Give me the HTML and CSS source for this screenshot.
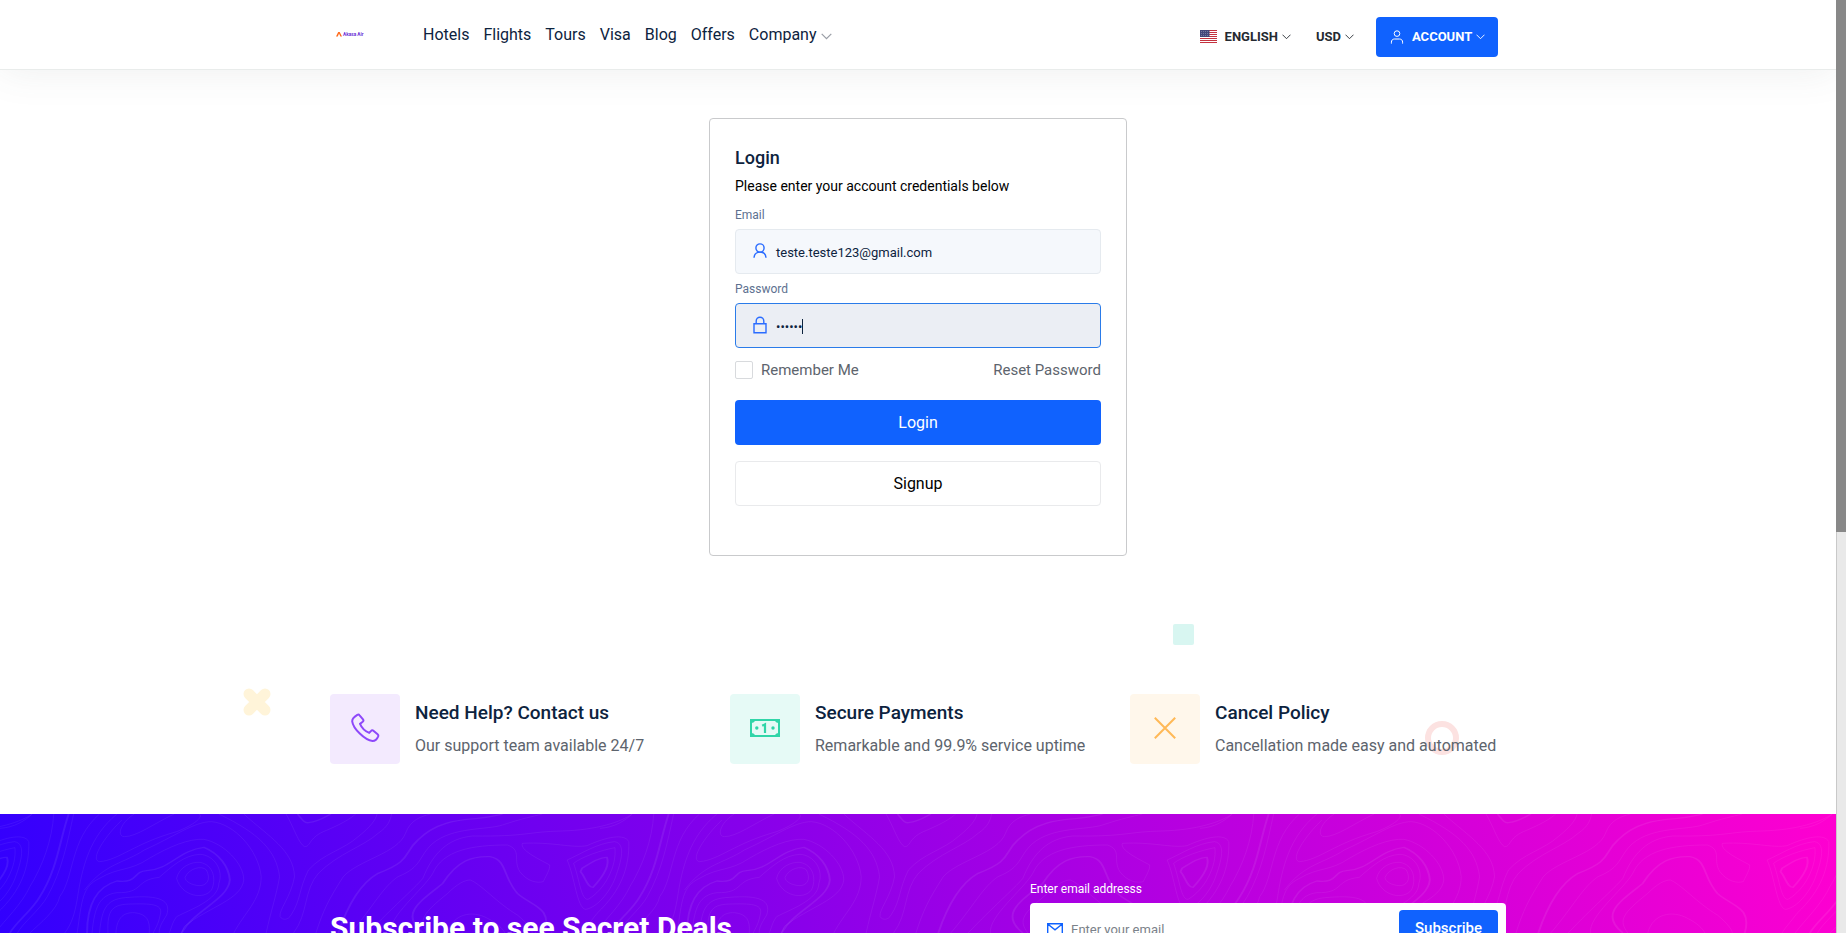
FILE: index.html
```html
<!DOCTYPE html>
<html lang="en">
<head>
<meta charset="utf-8">
<title>Login</title>
<link rel="stylesheet" href="styles.css">
</head>
<body>
<div class="page">
  <header class="header">
    <div class="container header-row">
      <a class="logo"><svg width="28" height="8" viewBox="0 0 28 8"><path d="M0 5.6 2.2 1h1.5L6 5.6H4.4L3 2.6 1.8 5.6z" fill="#ff6a1c"/><text x="7" y="5.4" class="logo-text" textLength="20.5" lengthAdjust="spacingAndGlyphs">Akasa Air</text></svg></a>
      <nav class="nav">
        <a>Hotels</a><a>Flights</a><a>Tours</a><a>Visa</a><a>Blog</a><a>Offers</a><a>Company<svg class="nav-chev" width="11" height="7" viewBox="0 0 11 7"><path d="M.7 .8 5.5 5.6 10.3 .8"/></svg></a>
      </nav>
      <div class="tools">
        <a class="tool lang"><svg class="flag" width="17" height="13" viewBox="0 0 17 13"><path fill="#fff" d="M0 0h17v13H0z"/><path d="M0 .5h17M0 2.5h17M0 4.5h17M0 6.5h17M0 8.5h17M0 10.5h17M0 12.5h17" stroke="#c4323f"/><path fill="#43477a" d="M0 0h9.5v7H0z"/><path d="M1 1.5h8M1 3.5h8M1 5.5h8" stroke="#8b8fb0" stroke-width=".7" stroke-dasharray="1 1"/></svg>ENGLISH<svg class="chev" width="9" height="6" viewBox="0 0 9 6"><path d="M.5 .7 4.5 4.7 8.5 .7"/></svg></a>
        <a class="tool usd">USD<svg class="chev" width="9" height="6" viewBox="0 0 9 6"><path d="M.5 .7 4.5 4.7 8.5 .7"/></svg></a>
        <a class="tool account"><svg class="person" width="14" height="14" viewBox="0 0 14 14"><circle cx="7" cy="3.6" r="2.8"/><path d="M1.4 13.6v-1.4c0-2 1.2-3.2 3.2-3.2h4.8c2 0 3.2 1.2 3.2 3.2v1.4"/></svg>ACCOUNT<svg class="chev" width="9" height="6" viewBox="0 0 9 6"><path d="M.5 .7 4.5 4.7 8.5 .7"/></svg></a>
      </div>
    </div>
  </header>

  <main class="main">
    <section class="card">
      <h1 class="card-title">Login</h1>
      <p class="card-sub">Please enter your account credentials below</p>
      <div class="label">Email</div>
      <div class="field"><svg class="field-icon" width="14" height="18" viewBox="0 0 14 18"><circle cx="7" cy="6" r="4.1"/><path d="M1 15.8c.3-3.600 2.800-5.700 6-5.700s5.700 2.100 6 5.700"/></svg><span>teste.teste123@gmail.com</span></div>
      <div class="label">Password</div>
      <div class="field focused"><svg class="field-icon" width="14" height="18" viewBox="0 0 14 18"><path d="M1 7.700h12v9H1zM3.200 7.700V5a3.800 3.800 0 0 1 7.600 0v2.700"/></svg><span>••••••</span><i class="caret"></i></div>
      <div class="options"><label class="remember"><i class="box"></i>Remember Me</label><a>Reset Password</a></div>
      <div class="btn primary">Login</div>
      <div class="btn outline">Signup</div>
    </section>
  </main>

  <section class="features">
    <svg class="decor cross" width="28" height="28" viewBox="0 0 28 28"><path d="M6 6 22 22M22 6 6 22"/></svg>
    <i class="decor square"></i>
    <i class="decor ring"></i>
    <div class="container feature-row">
      <article class="feature">
        <div class="tile violet"><svg width="30" height="30" viewBox="0 0 30 30"><path d="M7.300 1.900C5.200 3.200 2.100 5.600 2.200 8.300 3.100 15.500 14.800 27.200 22.500 28c2.800-.1 4.700-2.300 5.700-4.700.3-.8 0-1.500-.6-2l-4.200-3.600c-.7-.6-1.700-.6-2.300.1l-1.900 2.100c-4.300-1.800-7.600-5.200-9.200-9l2.700-2.100c.8-.7.9-1.700.3-2.500L9.600 2.300c-.6-.8-1.500-.9-2.300-.4z" fill="none" stroke="#8d48fa" stroke-width="2" stroke-linejoin="round"/></svg></div>
        <div><h2 class="feature-title">Need Help? Contact us</h2><p class="feature-text">Our support team available 24/7</p></div>
      </article>
      <article class="feature">
        <div class="tile mint"><svg width="30" height="18" viewBox="0 0 30 18"><path d="M1 1h28v16H1z" fill="none" stroke="#30d5a8" stroke-width="2"/><path d="M1 1h4c0 2-1.500 3-4 3zM29 1h-4c0 2 1.500 3 4 3zM1 17h4c0-2-1.500-3-4-3zM29 17h-4c0-2 1.500-3 4-3z" fill="#30d5a8"/><circle cx="6.800" cy="9" r="1.700" fill="#30d5a8"/><circle cx="23" cy="9" r="1.700" fill="#30d5a8"/><path d="M12.200 6.800l2.800-1.500V14" fill="none" stroke="#30d5a8" stroke-width="2.200"/></svg></div>
        <div><h2 class="feature-title">Secure Payments</h2><p class="feature-text">Remarkable and 99.9% service uptime</p></div>
      </article>
      <article class="feature">
        <div class="tile amber"><svg width="22" height="22" viewBox="0 0 22 22"><path d="M.8 .8 21.200 21.200M21.200 .8.800 21.200" stroke="#ffb957" stroke-width="2"/></svg></div>
        <div><h2 class="feature-title">Cancel Policy</h2><p class="feature-text">Cancellation made easy and automated</p></div>
      </article>
    </div>
  </section>

  <section class="subscribe">
    <svg class="contours" width="1836" height="119" viewBox="0 0 1836 119">
      <defs>
        <g id="topo" transform="scale(.4975 .33333) translate(0 -42)">
          <path d="M1170 205C1180 195 1205 170 1220 172C1226 195 1215 225 1192 262C1180 262 1178 235 1167 215Z" class="bold"/>
          <path d="M1153 190C1170 170 1210 150 1236 143C1240 200 1215 270 1182 298C1168 300 1165 240 1153 190Z"/>
          <path d="M1140 180C1170 160 1200 130 1235 125C1262 130 1245 200 1235 240C1220 290 1195 325 1177 328C1160 325 1155 230 1140 180Z"/>
          <path d="M1050 130C1110 125 1150 145 1180 137C1220 110 1255 100 1264 125C1265 200 1250 270 1200 340C1185 370 1175 385 1170 399"/>
          <path d="M1206 85C1236 82 1256 62 1271 42"/>
          <path d="M108 42C105 120 85 200 60 260C45 310 10 360 -10 399"/>
          <path d="M138 42C120 120 115 210 80 290C65 330 30 370 20 399" class="bold"/>
          <path d="M148 42C135 130 125 210 95 290C80 330 45 370 35 399"/>
          <path d="M200 42C140 120 150 230 120 290C115 330 80 370 60 399M235 42C180 110 165 200 155 300C150 340 145 370 130 399"/>
          <path d="M270 42C240 70 235 110 250 110C275 110 310 70 350 42M245 60C210 110 180 180 200 185C240 180 270 130 355 95C390 75 410 50 400 42"/>
          <path d="M170 270C210 190 250 190 290 150C350 110 390 65 425 65C470 70 520 150 525 230C525 300 490 340 470 399"/>
          <path d="M155 399C165 300 165 260 200 235C240 200 260 215 300 175C340 140 380 115 410 118C450 130 490 190 490 240C485 300 420 320 370 380L365 399"/>
          <path d="M175 399C175 310 195 260 235 243C280 250 265 215 295 212C340 210 360 150 410 142C440 160 460 200 462 240C458 300 390 330 365 399" class="bold"/>
          <path d="M185 399C190 320 200 285 235 278C290 280 270 240 320 232C345 200 370 165 402 163C430 165 450 210 440 250C440 300 380 330 355 350C345 370 345 385 340 399"/>
          <path d="M355 235C360 200 385 185 402 187C430 195 435 240 425 270C410 300 365 290 355 235ZM372 232C380 205 405 195 415 210C425 240 415 258 400 257C385 255 372 245 372 232Z"/>
          <path d="M200 399C205 320 215 295 260 292C320 285 345 300 335 345C325 370 320 380 320 399M217 399C215 330 225 312 265 312C310 310 328 315 322 345C318 375 312 385 308 399M233 399C235 350 250 337 270 338C295 342 302 360 300 399"/>
          <path d="M440 42C520 100 555 150 562 230C555 290 545 330 535 399"/>
          <path d="M490 42C540 110 590 150 592 230C585 290 560 330 563 350C568 362 580 360 585 345C605 300 600 270 620 210C650 160 690 150 720 110C745 80 755 60 758 42"/>
          <path d="M575 42C590 80 600 130 612 140C625 140 620 115 650 95C690 70 705 55 715 42"/>
          <path d="M598 42C608 60 612 70 620 68C640 65 655 50 665 42" class="bold"/>
          <path d="M590 399C620 340 610 270 640 220C680 160 730 140 760 100C780 80 785 60 787 42M635 399C650 330 660 300 690 230C720 180 800 160 815 100C825 60 845 50 865 42"/>
          <path d="M680 399C700 310 725 250 760 220C830 180 810 160 840 120C880 60 930 60 960 55C990 50 1000 45 1010 42" class="bold"/>
          <path d="M705 399C750 320 770 260 800 230C850 200 840 170 870 130C910 80 980 90 1010 75C1050 55 1070 50 1090 42M740 399C790 320 830 270 850 235C870 160 900 115 950 108C1060 110 1060 95 1130 93C1200 90 1250 65 1270 42"/>
          <path d="M785 399C780 350 850 270 870 220C890 150 950 135 1020 135C1050 150 1030 180 1045 215C1060 245 1080 250 1092 245C1100 220 1105 210 1105 195C1080 175 1045 150 1050 130"/>
          <path d="M850 399C800 340 850 300 890 250C920 180 950 168 985 170C1020 180 1010 230 1040 280C1070 320 1110 320 1095 399" class="bold"/>
          <path d="M860 399C840 360 850 340 900 280C920 250 935 240 945 240C965 250 1000 310 1040 345C1060 370 1070 390 1070 399M900 399C910 340 950 330 980 355C1000 370 1010 385 1015 399"/>
        </g>
      </defs>
      <use href="#topo" x="-600"/><use href="#topo"/><use href="#topo" x="600"/><use href="#topo" x="1200"/><use href="#topo" x="1800"/>
    </svg>
    <div class="container subscribe-row">
      <h2 class="subscribe-title">Subscribe to see Secret Deals</h2>
      <div class="subscribe-form">
        <div class="subscribe-label">Enter email addresss</div>
        <div class="subscribe-field">
          <svg class="mail" width="16" height="13" viewBox="0 0 16 13"><path d="M.7 .7h14.600v11.600H.7zM.7 1 8 6.800 15.300 1"/></svg>
          <span>Enter your email</span>
          <b class="subscribe-btn">Subscribe</b>
        </div>
      </div>
    </div>
  </section>
</div>
<div class="scrollbar"><div class="thumb"></div></div>
</body>
</html>
```
FILE: styles.css
```css
* { box-sizing: border-box; margin: 0; padding: 0; }
body { display: flex; height: 933px; overflow: hidden; background: #fff; font-family: Roboto, sans-serif; color: #0d233e; }
.page { width: 1836px; height: 933px; overflow: hidden; display: flex; flex-direction: column; }
.page > * { flex-shrink: 0; }
.scrollbar { width: 10px; background: #e9e9e9; border-left: 1px solid #c9c9c9; }
.thumb { height: 532px; margin-left: -1px; background: #888; }
.container { width: 1176px; margin: 0 330px; }
svg { display: block; flex-shrink: 0; }

.header { height: 70px; border-bottom: 1px solid #e9eceb; box-shadow: 0 0 40px rgba(82, 85, 90, .1); position: relative; }
.header-row { display: flex; height: 69px; }
.logo { padding: 31px 0 0 6px; width: 93px; }
.logo-text { font: 700 5px Roboto, sans-serif; fill: #6b2fd6; }
.nav { display: flex; gap: 14px; font-size: 16px; line-height: 69px; }
.nav a { display: flex; align-items: center; }
.nav-chev { margin: 4px 0 0 4px; fill: none; stroke: #9a9ea6; stroke-width: 1.2; }
.tools { display: flex; margin: 17px 8px 0 auto; height: 40px; font-size: 13px; font-weight: 700; line-height: 39px; color: #252a31; }
.tool { display: flex; align-items: center; padding-bottom: 1px; }
.chev { margin: 1px 0 0 4px; fill: none; stroke: currentColor; stroke-width: .9; }
.flag { margin-right: 8px; }
.usd { margin-left: 25px; }
.account { width: 122px; margin-left: 22px; padding-left: 14px; background: #1062fe; border-radius: 4px; color: #fff; }
.person { margin-right: 8px; fill: none; stroke: #fff; stroke-width: 1; }

.main { height: 554px; padding: 48px 0 0 709px; }
.card { width: 418px; height: 438px; padding: 25px; border: 1px solid #c9cacc; border-radius: 4px; }
.card-title { font-size: 18px; font-weight: 500; line-height: 28px; }
.card-sub { font-size: 14px; line-height: 28px; color: #000; }
.label { height: 29px; padding-top: 1px; font-size: 12px; line-height: 28px; color: #5d7190; }
.field { display: flex; align-items: center; height: 45px; padding: 0 17px; background: #f5f8fc; border: 1px solid #e5eaef; border-radius: 4px; font-size: 13px; }
.field span { padding-top: 2px; }
.field-icon { margin: -2px 9px 0 0; fill: none; stroke: #2a6cff; stroke-width: 1.4; }
.focused { background: #ebeef4; border-color: #2a7be9; }
.caret { width: 1px; height: 15px; margin-top: 2px; background: #0d233e; }
.options { display: flex; justify-content: space-between; height: 18px; margin-top: 13px; font-size: 15px; line-height: 18px; color: #5d646d; }
.remember { display: flex; gap: 8px; }
.box { width: 18px; height: 18px; border: 1px solid #d8dadd; border-radius: 2px; }
.btn { height: 45px; border-radius: 4px; font-size: 16px; line-height: 45px; text-align: center; }
.primary { margin-top: 21px; background: #1062fe; color: #fff; }
.outline { margin-top: 16px; border: 1px solid #e9eaec; line-height: 43px; color: #000; }

.features { position: relative; height: 190px; padding-top: 70px; }
.feature-row { display: grid; grid-template-columns: repeat(3, 400px); position: relative; }
.feature { display: flex; gap: 15px; }
.tile { display: flex; align-items: center; justify-content: center; width: 70px; height: 70px; padding-bottom: 2px; border-radius: 4px; }
.violet { background: #f3eafe; }
.mint { background: #e6faf6; }
.amber { background: #fff7eb; }
.feature-title { margin-top: 5px; font-size: 19px; font-weight: 500; line-height: 28px; }
.feature-text { margin-top: 5px; font-size: 16px; line-height: 28px; color: #5d646d; white-space: nowrap; }
.decor { position: absolute; }
.cross { left: 243px; top: 64px; stroke: #fff4d9; stroke-width: 11; stroke-linecap: round; }
.square { left: 1173px; top: 0; width: 21px; height: 21px; border-radius: 2px; background: #d8f6f1; }
.ring { left: 1425px; top: 97px; width: 34px; height: 34px; border: 6px solid #fce2e1; border-radius: 50%; }

.subscribe { position: relative; height: 300px; background: linear-gradient(75deg, #2c00ff, #ff00d0); }
.contours { position: absolute; left: 0; top: 0; overflow: hidden; fill: none; stroke: rgba(255, 255, 255, .075); stroke-width: 2; }
.bold { stroke-width: 4; }
.subscribe-row { position: relative; display: flex; justify-content: space-between; color: #fff; }
.subscribe-title { margin-top: 96px; font-size: 30px; font-weight: 700; line-height: 36px; }
.subscribe-form { width: 476px; padding-top: 65px; }
.subscribe-label { height: 24px; font-size: 12px; line-height: 20px; }
.subscribe-field { display: flex; align-items: center; height: 60px; padding: 0 8px 0 17px; background: #fff; border-radius: 4px; font-size: 13px; color: #7b828a; }
.subscribe-field span { margin-top: -8px; }
.mail { margin: -7px 8px 0 0; fill: none; stroke: #1062fe; stroke-width: 1.4; }
.subscribe-btn { width: 99px; height: 45px; margin: 0 0 1px auto; border-radius: 4px; background: #1062fe; color: #fff; font-size: 15px; font-weight: 500; line-height: 36px; text-align: center; }
```
